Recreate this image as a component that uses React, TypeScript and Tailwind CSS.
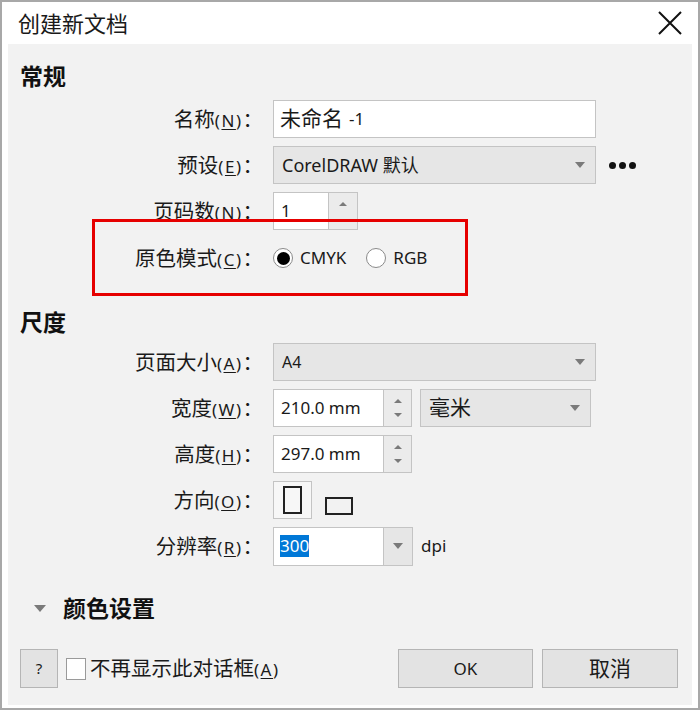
import type { ReactNode } from "react";

const font = { fontFamily: '"Noto Sans", "Noto Sans CJK SC", sans-serif' };

function Label({ text, keyChar }: { text: string; keyChar: string }) {
  return (
    <div className="w-[255px] shrink-0 text-right text-[20.5px] leading-none text-[#1a1a1a] whitespace-nowrap">
      {text}
      <span className="text-[17px] tracking-[1.5px]">
        (<span className="underline underline-offset-2">{keyChar}</span>)
      </span>
      ：
    </div>
  );
}

function Row({ label, keyChar, children }: { label: string; keyChar: string; children: ReactNode }) {
  return (
    <div className="flex h-[38px] items-center">
      <Label text={label} keyChar={keyChar} />
      <div className="ml-[10px] flex h-full items-center">{children}</div>
    </div>
  );
}

function Arrow() {
  return (
    <svg width="10" height="6" viewBox="0 0 10 6" className="block">
      <path d="M0 0 L10 0 L5 6 Z" fill="#7a7a7a" />
    </svg>
  );
}

function Select({ value, width, textClass }: { value: string; width: string; textClass: string }) {
  return (
    <div className={`flex h-[38px] ${width} items-center justify-between border border-[#c4c4c4] bg-[#e6e6e6] pl-[8px] pr-[10px]`}>
      <span className={`${textClass} text-[#1a1a1a]`}>{value}</span>
      <Arrow />
    </div>
  );
}

function Spin({ value }: { value: string }) {
  return (
    <div className="flex h-[38px] border border-[#c4c4c4] bg-white">
      <div className="flex w-[109px] items-center pl-[7px] text-[17px] text-[#1a1a1a]">{value}</div>
      <div className="flex w-[28px] flex-col items-center justify-between border-l border-[#c4c4c4] bg-[#ebebeb] py-[9px]">
        <svg width="8" height="4" viewBox="0 0 8 4"><path d="M0 4 L4 0 L8 4 Z" fill="#7a7a7a" /></svg>
        <svg width="8" height="4" viewBox="0 0 8 4"><path d="M0 0 L8 0 L4 4 Z" fill="#7a7a7a" /></svg>
      </div>
    </div>
  );
}

export default function App() {
  return (
    <div className="relative h-[710px] w-[700px] border-2 border-[#a8a8a8] bg-white" style={font}>
      <div className="flex h-[42px] items-center justify-between pl-[16px] pr-[16px]">
        <span className="text-[22px] text-[#1a1a1a]">创建新文档</span>
        <svg width="24" height="24" viewBox="0 0 24 24">
          <path d="M1 1 L23 23 M23 1 L1 23" stroke="#111" strokeWidth="2" />
        </svg>
      </div>

      <div className="mx-[6px] h-[661px] bg-[#f2f2f2] pt-[18px]">
        <div className="pl-[12px] text-[23px] font-bold leading-[28px] text-[#111]">常规</div>

        <div className="mt-[10px] flex flex-col gap-[8px]">
          <Row label="名称" keyChar="N">
            <div className="flex h-[38px] w-[323px] items-center border border-[#c4c4c4] bg-white pl-[6px] text-[21px] text-[#1a1a1a]">
              未命名 <span className="ml-[6px] text-[17px]">-1</span>
            </div>
          </Row>
          <Row label="预设" keyChar="E">
            <Select value="CorelDRAW 默认" width="w-[323px]" textClass="text-[18px]" />
            <div className="ml-[13px] flex gap-[3px]">
              <span className="h-[7px] w-[7px] rounded-full bg-[#111]" />
              <span className="h-[7px] w-[7px] rounded-full bg-[#111]" />
              <span className="h-[7px] w-[7px] rounded-full bg-[#111]" />
            </div>
          </Row>
          <Row label="页码数" keyChar="N">
            <div className="flex h-[38px] border border-[#c4c4c4] bg-white">
              <div className="flex w-[54px] items-center pl-[7px] text-[17px] text-[#1a1a1a]">1</div>
              <div className="flex w-[29px] flex-col items-center border-l border-[#c4c4c4] bg-[#ebebeb] pt-[9px]">
                <svg width="8" height="4" viewBox="0 0 8 4"><path d="M0 4 L4 0 L8 4 Z" fill="#7a7a7a" /></svg>
              </div>
            </div>
          </Row>
        </div>

        <div className="mt-[9px]">
          <Row label="原色模式" keyChar="C">
            <div className="flex items-center text-[17px] text-[#1a1a1a]">
              <span className="flex h-[20px] w-[20px] items-center justify-center rounded-full border border-[#8a8a8a] bg-white">
                <span className="h-[13px] w-[13px] rounded-full bg-black" />
              </span>
              <span className="ml-[7px]">CMYK</span>
              <span className="ml-[20px] h-[20px] w-[20px] rounded-full border border-[#8a8a8a] bg-white" />
              <span className="ml-[7px]">RGB</span>
            </div>
          </Row>
        </div>

        <div className="mt-[31px] pl-[12px] text-[23px] font-bold leading-[28px] text-[#111]">尺度</div>

        <div className="mt-[7px] flex flex-col gap-[8px]">
          <Row label="页面大小" keyChar="A">
            <Select value="A4" width="w-[323px]" textClass="text-[16px]" />
          </Row>
          <Row label="宽度" keyChar="W">
            <Spin value="210.0 mm" />
            <div className="ml-[8px]">
              <Select value="毫米" width="w-[171px]" textClass="text-[21px]" />
            </div>
          </Row>
          <Row label="高度" keyChar="H">
            <Spin value="297.0 mm" />
          </Row>
          <Row label="方向" keyChar="O">
            <div className="flex h-[38px] w-[39px] items-center justify-center border border-[#c4c4c4] bg-[#f7f7f7]">
              <span className="h-[28px] w-[19px] border-2 border-[#222]" />
            </div>
            <span className="ml-[13px] mt-[12px] h-[18px] w-[28px] border-2 border-[#222]" />
          </Row>
          <Row label="分辨率" keyChar="R">
            <div className="flex h-[39px] border border-[#c4c4c4] bg-white">
              <div className="flex w-[109px] items-center pl-[6px]">
                <span className="bg-[#0078d7] text-[17px] leading-[22px] text-white">300</span>
              </div>
              <div className="flex w-[29px] items-center justify-center border-l border-[#c4c4c4] bg-[#e6e6e6]">
                <Arrow />
              </div>
            </div>
            <span className="ml-[8px] text-[17px] text-[#1a1a1a]">dpi</span>
          </Row>
        </div>

        <div className="mt-[29px] flex h-[28px] items-center pl-[26px]">
          <svg width="12" height="7" viewBox="0 0 12 7"><path d="M0 0 L12 0 L6 7 Z" fill="#7a7a7a" /></svg>
          <span className="ml-[17px] text-[23px] font-bold text-[#111]">颜色设置</span>
        </div>

        <div className="mt-[27px] flex h-[39px] items-center pl-[12px] pr-[14px]">
          <div className="flex h-[39px] w-[38px] items-center justify-center border border-[#b5b5b5] bg-[#e3e3e3] text-[15px] text-[#1a1a1a]">?</div>
          <span className="ml-[8px] h-[22px] w-[20px] border border-[#9a9a9a] bg-white" />
          <span className="ml-[4px] text-[20.5px] text-[#1a1a1a]">
            不再显示此对话框<span className="text-[17px] tracking-[1.5px]">(<span className="underline underline-offset-2">A</span>)</span>
          </span>
          <div className="ml-auto flex gap-[9px]">
            <div className="flex h-[39px] w-[135px] items-center justify-center border border-[#b5b5b5] bg-[#e3e3e3] text-[17px] text-[#1a1a1a]">OK</div>
            <div className="flex h-[39px] w-[136px] items-center justify-center border border-[#b5b5b5] bg-[#e3e3e3] text-[21px] text-[#1a1a1a]">取消</div>
          </div>
        </div>
      </div>

      <div className="absolute left-[90px] top-[217px] h-[77px] w-[376px] border-[3px] border-[#e60000]" />
    </div>
  );
}
